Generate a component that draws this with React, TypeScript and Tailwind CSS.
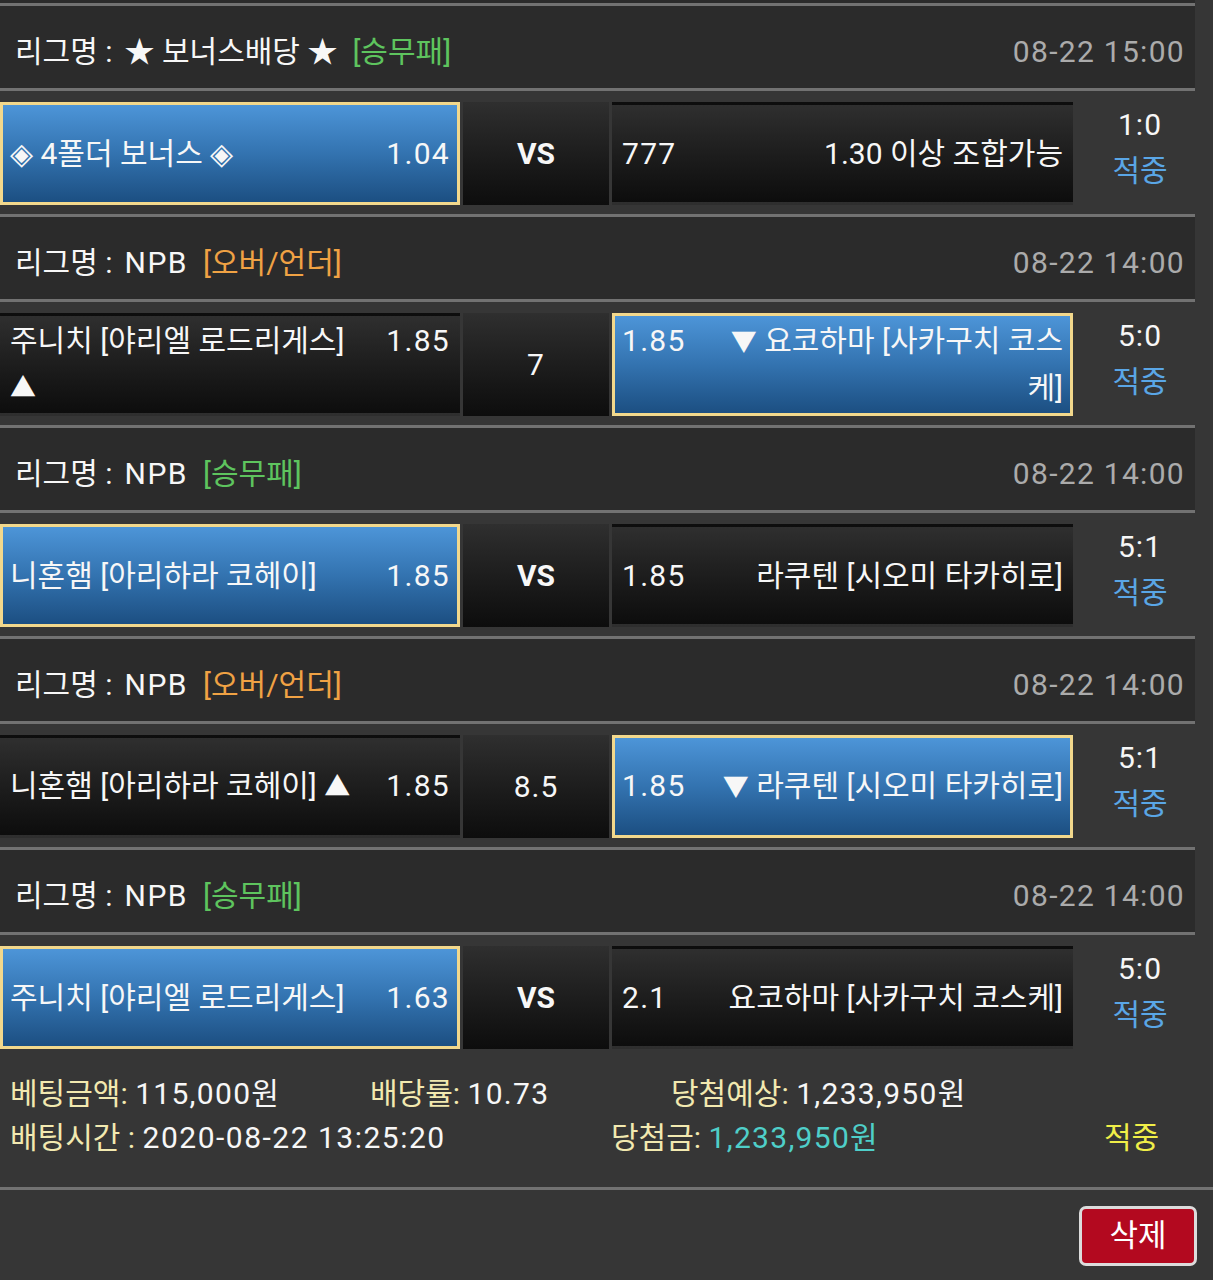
import React from "react";

type Team = { name: string; odds: string; sel?: boolean };
type Group = {
  league: string;
  type: string;
  typeColor: "green" | "orange";
  time: string;
  home: Team;
  mid: string;
  midBold?: boolean;
  away: Team;
  score: string;
};

const groups: Group[] = [
  {
    league: "★ 보너스배당 ★",
    type: "[승무패]",
    typeColor: "green",
    time: "08-22 15:00",
    home: { name: "◈ 4폴더 보너스 ◈", odds: "1.04", sel: true },
    mid: "VS",
    midBold: true,
    away: { name: "1.30 이상 조합가능", odds: "777" },
    score: "1:0",
  },
  {
    league: "NPB",
    type: "[오버/언더]",
    typeColor: "orange",
    time: "08-22 14:00",
    home: { name: "주니치 [야리엘 로드리게스] ▲", odds: "1.85" },
    mid: "7",
    away: { name: "▼ 요코하마 [사카구치 코스케]", odds: "1.85", sel: true },
    score: "5:0",
  },
  {
    league: "NPB",
    type: "[승무패]",
    typeColor: "green",
    time: "08-22 14:00",
    home: { name: "니혼햄 [아리하라 코헤이]", odds: "1.85", sel: true },
    mid: "VS",
    midBold: true,
    away: { name: "라쿠텐 [시오미 타카히로]", odds: "1.85" },
    score: "5:1",
  },
  {
    league: "NPB",
    type: "[오버/언더]",
    typeColor: "orange",
    time: "08-22 14:00",
    home: { name: "니혼햄 [아리하라 코헤이] ▲", odds: "1.85" },
    mid: "8.5",
    away: { name: "▼ 라쿠텐 [시오미 타카히로]", odds: "1.85", sel: true },
    score: "5:1",
  },
  {
    league: "NPB",
    type: "[승무패]",
    typeColor: "green",
    time: "08-22 14:00",
    home: { name: "주니치 [야리엘 로드리게스]", odds: "1.63", sel: true },
    mid: "VS",
    midBold: true,
    away: { name: "요코하마 [사카구치 코스케]", odds: "2.1" },
    score: "5:0",
  },
];

function Name({ text }: { text: string }) {
  const parts = text.split(/([▲▼])/);
  return (
    <>
      {parts.map((p, i) =>
        p === "▲" || p === "▼" ? (
          <span key={i} className="text-[26px]">
            {p}
          </span>
        ) : (
          <React.Fragment key={i}>{p}</React.Fragment>
        )
      )}
    </>
  );
}

function cellClass(sel?: boolean) {
  return sel
    ? "h-[103px] flex items-center border-[3px] border-[#f2d88c] bg-linear-to-b from-[#4d95d8] via-[#3373b0] to-[#1c4f82] px-[7px]"
    : "h-[103px] flex items-center border-[3px] border-transparent bg-linear-to-b from-[#2f2f2f] to-[#0d0d0d] px-[7px]";
}

function HomeCell({ t }: { t: Team }) {
  return (
    <div className={cellClass(t.sel) + " w-[460px]"}>
      <div className="flex w-full items-start justify-between gap-4 leading-[46px]">
        <span className="min-w-0">
          <Name text={t.name} />
        </span>
        <span className="shrink-0 tracking-[1.3px]">{t.odds}</span>
      </div>
    </div>
  );
}

function AwayCell({ t }: { t: Team }) {
  return (
    <div className={cellClass(t.sel) + " w-[461px]"}>
      <div className="flex w-full items-start justify-between gap-4 leading-[46px]">
        <span className="shrink-0 tracking-[1.3px]">{t.odds}</span>
        <span className="min-w-0 text-right">
          <Name text={t.name} />
        </span>
      </div>
    </div>
  );
}

function Line({ full }: { full?: boolean }) {
  return <div className={full ? "h-[3px] w-full bg-[#727272]" : "h-[3px] w-[1195px] bg-[#727272]"} />;
}

function GroupBlock({ g }: { g: Group }) {
  return (
    <div className="w-[1195px]">
      <Line />
      <div className="flex h-[82px] items-center justify-between bg-[#2b2b2b] pl-[15px] pr-[10px] pt-[8px]">
        <div className="flex items-center">
          <span>
            리그명 :<span className={g.league === "NPB" ? "ml-[12px] tracking-[1.5px]" : "ml-[12px]"}>{g.league}</span>
          </span>
          <span className={g.typeColor === "green" ? "ml-[15px] text-[#5ec45e]" : "ml-[15px] text-[#f0a244]"}>{g.type}</span>
        </div>
        <span className="tracking-[1.3px] text-[#ababab]">{g.time}</span>
      </div>
      <Line />
      <div className="flex h-[123px]">
        <div className="flex gap-[3px] pt-[11px]">
          <HomeCell t={g.home} />
          <div className="flex h-[103px] w-[146px] items-center justify-center bg-linear-to-b from-[#2f2f2f] to-[#0d0d0d]">
            <span className={g.midBold ? "font-bold" : "tracking-[1px]"}>{g.mid}</span>
          </div>
          <AwayCell t={g.away} />
        </div>
        <div className="flex w-[122px] flex-col items-center pl-[12px] pt-[11px] leading-[46px]">
          <span className="tracking-[1px]">{g.score}</span>
          <span className="text-[#5aa6e6]">적중</span>
        </div>
      </div>
    </div>
  );
}

export default function App() {
  return (
    <div className="min-h-[1280px] w-[1213px] bg-[#363636] font-[family-name:Roboto,Noto_Sans_CJK_KR,sans-serif] text-[30px] text-[#f7f7f7]">
      <div className="h-[3px] w-[1195px] bg-[#2b2b2b]" />
      {groups.map((g, i) => (
        <GroupBlock key={i} g={g} />
      ))}
      <div className="h-[129px] w-[1195px] pl-[10px] pt-[14px] leading-[44px]">
        <div className="flex">
          <div className="w-[360px]">
            <span className="text-[#f2e9b0]">베팅금액:</span> <span className="tracking-[1.3px]">115,000</span>원
          </div>
          <div className="w-[301px]">
            <span className="text-[#f2e9b0]">배당률:</span> <span className="tracking-[1.3px]">10.73</span>
          </div>
          <div>
            <span className="text-[#f2e9b0]">당첨예상:</span> <span className="tracking-[1.3px]">1,233,950</span>원
          </div>
        </div>
        <div className="flex">
          <div className="w-[601px]">
            <span className="text-[#f2e9b0]">배팅시간 :</span> <span className="tracking-[1.5px]">2020-08-22 13:25:20</span>
          </div>
          <div className="w-[493px]">
            <span className="text-[#f2e9b0]">당첨금:</span>{" "}
            <span className="text-[#4fcfc9]">
              <span className="tracking-[1.3px]">1,233,950</span>원
            </span>
          </div>
          <div className="text-[#f0ee48]">적중</div>
        </div>
      </div>
      <Line full />
      <div className="flex justify-end pr-[16px] pt-[16px]">
        <button className="flex h-[60px] w-[118px] items-center justify-center rounded-[7px] border-[3px] border-[#dcdcdc] bg-[#b3091f] text-[31px] text-white">
          삭제
        </button>
      </div>
    </div>
  );
}
